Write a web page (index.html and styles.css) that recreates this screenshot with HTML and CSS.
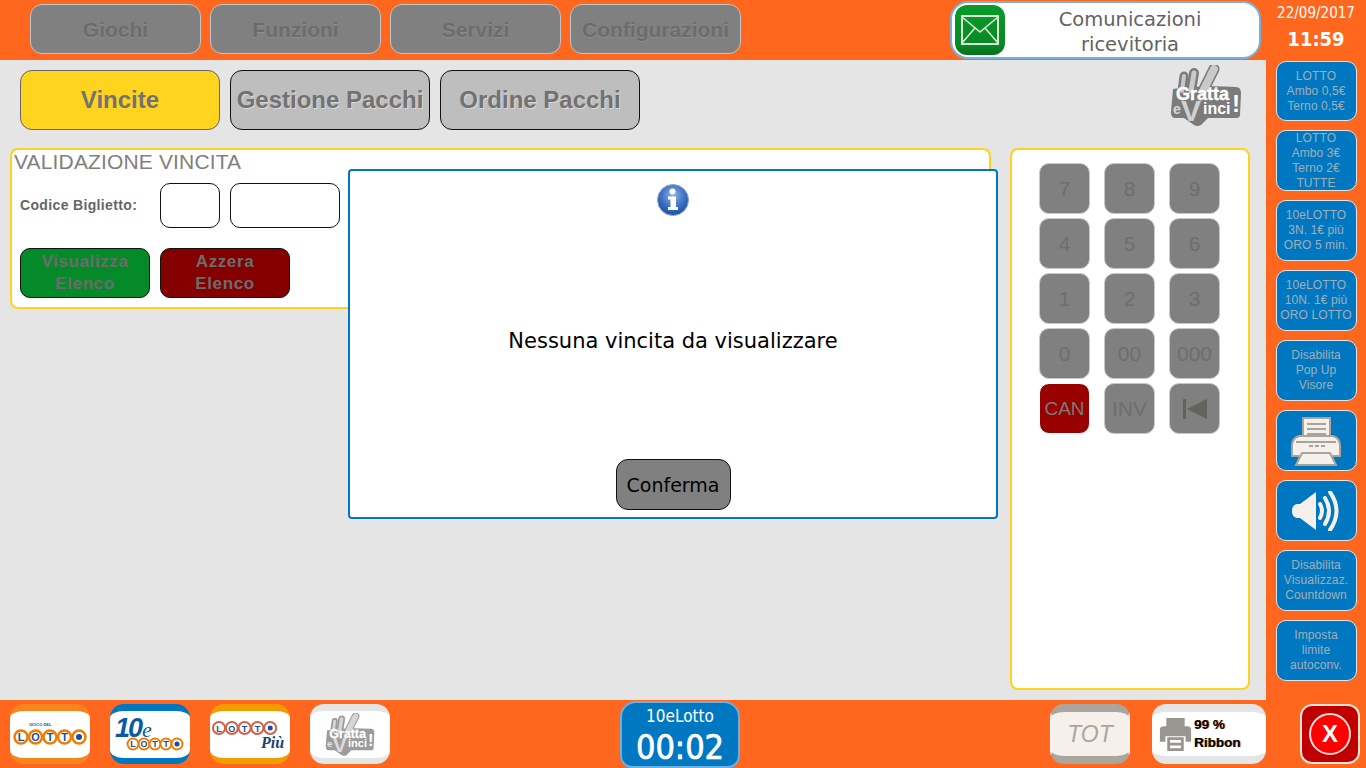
FILE: index.html
```html
<!DOCTYPE html>
<html lang="it">
<head>
<meta charset="utf-8">
<title>Validazione vincita</title>
<link rel="stylesheet" href="styles.css">
</head>
<body>
<svg class="defs" width="0" height="0" aria-hidden="true">
  <defs>
    <symbol id="gratta" viewBox="0 0 72 62">
      <path d="M3 24 Q30 20 66 22 Q71 22 71 28 L70 50 Q70 53 66 53 L38 53 L31 60 Q27 62 24 60 L14 53 L5 53 Q1 53 1 47 Z" fill="#7b7b7b"/>
      <path d="M12 26 L14 11" stroke="#7b7b7b" stroke-width="9" stroke-linecap="round"/>
      <path d="M12 26 L14 11" stroke="#c9c9c9" stroke-width="4" stroke-linecap="round"/>
      <path d="M21 26 L24 8" stroke="#7b7b7b" stroke-width="10" stroke-linecap="round"/>
      <path d="M21 26 L24 8" stroke="#c9c9c9" stroke-width="5" stroke-linecap="round"/>
      <path d="M33 26 L44 4" stroke="#7b7b7b" stroke-width="11" stroke-linecap="round"/>
      <path d="M33 26 L44 4" stroke="#c9c9c9" stroke-width="8" stroke-linecap="round"/>
      <text x="6" y="35" class="logo-gratta">Gratta</text>
      <text x="3" y="49" class="logo-e">e</text>
      <text x="11" y="56" class="logo-v">V</text>
      <text x="33" y="49" class="logo-inci">inci</text>
      <text x="62" y="47" class="logo-bang">!</text>
    </symbol>
    <symbol id="printer-grey" viewBox="0 0 36 36">
      <rect x="8" y="0" width="20" height="11" fill="#999690"/>
      <path d="M5 9 H31 Q35 9 35 13 V26 H29 V20 H7 V26 H1 V13 Q1 9 5 9 Z" fill="#999690"/>
      <rect x="9" y="21" width="18" height="15" fill="#999690"/>
      <rect x="12" y="24" width="12" height="3" fill="#fff"/>
      <rect x="12" y="30" width="12" height="3" fill="#fff"/>
    </symbol>
  </defs>
</svg>

<div class="app">
  <header class="topbar">
    <nav class="topnav">
      <div class="topbtn">Giochi</div>
      <div class="topbtn">Funzioni</div>
      <div class="topbtn">Servizi</div>
      <div class="topbtn">Configurazioni</div>
    </nav>
    <div class="comms">
      <span class="comms-icon">
        <svg width="38" height="30" viewBox="0 0 38 30">
          <rect x="1" y="1" width="36" height="28" fill="none" stroke="#d8ead8" stroke-width="2"/>
          <path d="M1 2 L19 17 L37 2 M1 28 L14 13 M37 28 L24 13" fill="none" stroke="#d8ead8" stroke-width="1.6"/>
        </svg>
      </span>
      <span class="comms-text">Comunicazioni<br>ricevitoria</span>
    </div>
  </header>

  <aside class="side">
    <div class="clock">
      <div class="clock-date">22/09/2017</div>
      <div class="clock-time">11:59</div>
    </div>
    <div class="sidebtn sidebtn-first"><span>LOTTO<br>Ambo 0,5€<br>Terno 0,5€</span></div>
    <div class="sidebtn"><span>LOTTO<br>Ambo 3€<br>Terno 2€<br>TUTTE</span></div>
    <div class="sidebtn"><span>10eLOTTO<br>3N. 1€ più<br>ORO 5 min.</span></div>
    <div class="sidebtn"><span>10eLOTTO<br>10N. 1€ più<br>ORO LOTTO</span></div>
    <div class="sidebtn"><span>Disabilita<br>Pop Up<br>Visore</span></div>
    <div class="sidebtn">
      <svg width="50" height="50" viewBox="0 0 50 50">
        <rect x="12" y="2" width="27" height="27" fill="#f5f1ea" stroke="#a8a49c" stroke-width="2"/>
        <path d="M16 8 H35 M16 13 H35 M16 18 H35" stroke="#a8a49c" stroke-width="2"/>
        <path d="M8 20 H42 Q49 22 49 30 V40 H1 V30 Q1 22 8 20 Z" fill="#f5f1ea" stroke="#a8a49c" stroke-width="2"/>
        <path d="M5 26 H45" stroke="#a8a49c" stroke-width="2"/>
        <path d="M18 30 H22 M24 30 H28 M30 30 H34" stroke="#a8a49c" stroke-width="2"/>
        <path d="M11 37 H39 L45 49 H5 Z" fill="#f5f1ea" stroke="#a8a49c" stroke-width="2"/>
      </svg>
    </div>
    <div class="sidebtn">
      <svg width="50" height="40" viewBox="0 0 50 40">
        <path d="M9 13 L25 1 V39 L9 27 H6 Q1 26 1 20 Q1 14 6 13 Z" fill="#f5f1ea"/>
        <path d="M29 13 Q33 20 29 27 M34 7 Q42 20 34 33 M39 1 Q52 20 39 39" fill="none" stroke="#f5f1ea" stroke-width="4" stroke-linecap="round"/>
      </svg>
    </div>
    <div class="sidebtn"><span>Disabilita<br>Visualizzaz.<br>Countdown</span></div>
    <div class="sidebtn"><span>Imposta<br>limite<br>autoconv.</span></div>
  </aside>

  <main class="main">
    <div class="tabrow">
      <div class="tabs">
        <div class="tab tab-active">Vincite</div>
        <div class="tab">Gestione Pacchi</div>
        <div class="tab">Ordine Pacchi</div>
      </div>
      <svg class="tab-logo" width="72" height="62"><use href="#gratta"/></svg>
    </div>

    <div class="content">
      <section class="panel panel-form">
        <h1 class="panel-title">VALIDAZIONE VINCITA</h1>
        <div class="code-row">
          <label class="code-label">Codice Biglietto:</label>
          <div class="code-box code-short"></div>
          <div class="code-box code-long"></div>
        </div>
        <div class="action-row">
          <div class="action action-green">Visualizza<br>Elenco</div>
          <div class="action action-red">Azzera<br>Elenco</div>
        </div>
      </section>

      <section class="panel panel-keys">
        <div class="keypad">
          <div class="key">7</div><div class="key">8</div><div class="key">9</div>
          <div class="key">4</div><div class="key">5</div><div class="key">6</div>
          <div class="key">1</div><div class="key">2</div><div class="key">3</div>
          <div class="key">0</div><div class="key">00</div><div class="key">000</div>
          <div class="key key-can">CAN</div><div class="key">INV</div>
          <div class="key">
            <svg width="24" height="20" viewBox="0 0 24 20"><rect x="0" y="0" width="3" height="20" fill="#64625c"/><path d="M24 0 V20 L4 10 Z" fill="#64625c"/></svg>
          </div>
        </div>
      </section>
    </div>

    <div class="modal">
      <svg class="modal-icon" width="32" height="32" viewBox="0 0 32 32">
        <defs>
          <radialGradient id="infoGrad" cx="50%" cy="35%" r="65%">
            <stop offset="0%" stop-color="#8fb4ea"/>
            <stop offset="60%" stop-color="#3c6fc0"/>
            <stop offset="100%" stop-color="#1f4f9e"/>
          </radialGradient>
        </defs>
        <circle cx="16" cy="16" r="15.5" fill="url(#infoGrad)" stroke="#8ea8cc" stroke-width="1"/>
        <circle cx="15.5" cy="7.5" r="3" fill="#fff"/>
        <path d="M11 12.5 H19 V23 H21 V26 H11 V23 H13.5 V15.5 H11 Z" fill="#fff"/>
      </svg>
      <p class="modal-msg">Nessuna vincita da visualizzare</p>
      <div class="modal-btn">Conferma</div>
    </div>
  </main>

  <footer class="bottom">
    <div class="games">
      <div class="game game-lotto">
        <svg width="78" height="44" viewBox="0 0 78 44">
          <text x="18" y="13" class="lotto-small">GIOCO DEL</text>
          <g class="lotto-ring"><circle cx="10" cy="24" r="6.5"/><circle cx="24.500" cy="24" r="6.500"/><circle cx="39" cy="24" r="6.5"/><circle cx="53.500" cy="24" r="6.500"/><circle cx="68" cy="24" r="6.5"/></g>
          <text x="10" y="28" class="lotto-letter">L</text><text x="24.500" y="28" class="lotto-letter">O</text><text x="39" y="28" class="lotto-letter">T</text><text x="53.500" y="28" class="lotto-letter">T</text>
          <circle cx="68" cy="24" r="3" fill="#1f4c9a"/>
        </svg>
      </div>
      <div class="game game-10">
        <svg width="78" height="44" viewBox="0 0 78 44">
          <text x="4" y="24" class="ten-num">10</text>
          <text x="31" y="24" class="ten-e">e</text>
          <g class="lotto-ring-sm"><circle cx="22" cy="31" r="5.500"/><circle cx="33" cy="31" r="5.500"/><circle cx="44" cy="31" r="5.500"/><circle cx="55" cy="31" r="5.500"/><circle cx="66" cy="31" r="5.500"/></g>
          <text x="22" y="34" class="lotto-letter-sm">L</text><text x="33" y="34" class="lotto-letter-sm">O</text><text x="44" y="34" class="lotto-letter-sm">T</text><text x="55" y="34" class="lotto-letter-sm">T</text>
          <circle cx="66" cy="31" r="2.500" fill="#1f4c9a"/>
        </svg>
      </div>
      <div class="game game-piu">
        <svg width="78" height="44" viewBox="0 0 78 44">
          <g class="piu-ring"><circle cx="8" cy="15" r="6"/><circle cx="20.800" cy="15" r="6"/><circle cx="33.600" cy="15" r="6"/><circle cx="46.400" cy="15" r="6"/><circle cx="59.200" cy="15" r="6"/></g>
          <text x="8" y="18.500" class="lotto-letter-sm">L</text><text x="20.800" y="18.500" class="lotto-letter-sm">O</text><text x="33.600" y="18.500" class="lotto-letter-sm">T</text><text x="46.400" y="18.500" class="lotto-letter-sm">T</text>
          <circle cx="59.200" cy="15" r="2.500" fill="#1f4c9a"/>
          <text x="50" y="35" class="piu-text">Più</text>
        </svg>
      </div>
      <div class="game game-gratta">
        <svg class="game-gratta-logo" width="50" height="44"><use href="#gratta"/></svg>
      </div>
    </div>
    <div class="timer">
      <div class="timer-name">10eLotto</div>
      <div class="timer-count">00:02</div>
    </div>
    <div class="bottom-right">
      <div class="tot">TOT</div>
      <div class="ribbon">
        <svg width="33" height="33"><use href="#printer-grey"/></svg>
        <span class="ribbon-text">99 %<br>Ribbon</span>
      </div>
      <div class="close">
        <span class="close-ring">X</span>
      </div>
    </div>
  </footer>
</div>
</body>
</html>
```

FILE: styles.css
```css
* { box-sizing: border-box; }
html, body { margin: 0; padding: 0; }
body { width: 1366px; height: 768px; overflow: hidden; font-family: "Liberation Sans", Arial, sans-serif; }
.defs { position: absolute; }

.app {
  display: grid;
  grid-template-columns: 1266px 100px;
  grid-template-rows: 60px 640px 68px;
  width: 1366px;
  height: 768px;
  background: #ff671f;
}

/* top bar */
.topbar { grid-column: 1; grid-row: 1; display: flex; justify-content: space-between; padding-left: 30px; padding-right: 5px; }
.topnav { display: flex; gap: 9px; padding-top: 4px; }
.topbtn {
  width: 171px; height: 50px;
  display: flex; align-items: center; justify-content: center;
  background: #808080;
  border: 1px solid #c4c4c4;
  border-radius: 12px;
  padding-top: 2px;
  color: #6c6c6c;
  font-weight: 700;
  font-size: 21px;
  text-shadow: 0 1px 1px #8f8f8f;
}
.comms {
  width: 311px; height: 58px; margin-top: 1px;
  display: flex; align-items: center;
  background: #fff;
  border: 2px solid #7ab0dc;
  border-radius: 18px;
  padding-left: 3px;
}
.comms-icon {
  width: 50px; height: 50px;
  display: flex; align-items: center; justify-content: center;
  border-radius: 12px;
  background: linear-gradient(#0a9b2a, #088a24 80%, #06701c);
  flex: none;
}
.comms-text {
  flex: 1;
  text-align: center;
  font-family: "DejaVu Sans", sans-serif;
  font-size: 19.5px;
  line-height: 25px;
  color: #636363;
  padding-top: 4px;
  padding-right: 4px;
}

/* side column */
.side { grid-column: 2; grid-row: 1 / 3; display: flex; flex-direction: column; align-items: center; gap: 9px; }
.clock { height: 52px; width: 100%; flex: none; text-align: center; color: #fff; }
.clock-date { font-family: "DejaVu Sans Condensed", "DejaVu Sans", sans-serif; font-size: 15px; line-height: 18px; padding-top: 4px; height: 22px; }
.clock-time { font-family: "DejaVu Sans Condensed", "DejaVu Sans", sans-serif; font-weight: 700; font-size: 20px; line-height: 24px; padding-top: 5px; }
.sidebtn {
  width: 81px; height: 61px;
  flex: none;
  display: flex; align-items: center; justify-content: center;
  background: #0078c1;
  border: 1px solid #dfe6ea;
  border-radius: 10px;
  color: #a2aeb6;
  font-size: 12px;
  line-height: 15px;
  text-align: center;
  letter-spacing: 0.1px;
}
.sidebtn-first { height: 60px; }

/* main */
.main { grid-column: 1; grid-row: 2; position: relative; background: #e5e5e5; padding: 5px 16px 10px 10px; }
.tabrow { display: flex; justify-content: space-between; align-items: flex-start; height: 83px; padding-left: 10px; padding-right: 8px; }
.tabs { display: flex; gap: 10px; padding-top: 5px; }
.tab {
  width: 200px; height: 60px;
  display: flex; align-items: center; justify-content: center;
  background: #bebebe;
  border: 1px solid #111;
  border-radius: 12px;
  color: #727272;
  font-weight: 700;
  font-size: 24px;
  text-shadow: 1px 1px 0 #d8d8d8;
}
.tab-active { background: #ffd41f; border-color: #666; text-shadow: none; }
.content { display: flex; gap: 19px; align-items: flex-start; }
.panel { background: #fff; border: 2px solid #ffd21f; border-radius: 8px; }
.panel-form { width: 981px; height: 161px; padding: 0 8px; }
.panel-title { margin: 0 0 0 -6px; font-weight: 400; font-size: 21px; line-height: 24px; color: #808080; letter-spacing: 0.15px; }
.code-row { display: flex; align-items: center; margin-top: 9px; height: 45px; }
.code-label { width: 140px; font-weight: 700; font-size: 14px; line-height: 16px; color: #666; letter-spacing: 0.35px; padding-bottom: 2px; }
.code-box { height: 45px; background: #fff; border: 1px solid #111; border-radius: 10px; }
.code-short { width: 60px; margin-right: 10px; }
.code-long { width: 110px; }
.action-row { display: flex; gap: 10px; margin-top: 20px; }
.action {
  width: 130px; height: 50px;
  display: flex; align-items: center; justify-content: center;
  border: 1px solid #111;
  border-radius: 10px;
  color: #6c6c6c;
  font-weight: 700;
  font-size: 17px;
  line-height: 22px;
  letter-spacing: 0.6px;
  text-align: center;
}
.action-green { background: #058a2a; }
.action-red { background: #840000; }

.panel-keys { width: 240px; height: 542px; padding: 13px 27px; }
.keypad { display: grid; grid-template-columns: repeat(3, 51px); grid-auto-rows: 51px; column-gap: 14px; row-gap: 4px; }
.key {
  display: flex; align-items: center; justify-content: center;
  background: #808080;
  border: 1px solid #c8c8c8;
  border-radius: 10px;
  color: #6e6e6e;
  font-size: 21px;
}
.key-can { background: #990000; border-color: #fff; color: #7a7a7a; font-size: 19px; }

/* modal overlay */
.modal {
  position: absolute;
  left: 348px; top: 109px;
  width: 650px; height: 350px;
  display: flex; flex-direction: column; align-items: center;
  background: #fff;
  border: 2px solid #0078c1;
  border-radius: 4px;
  padding-top: 13px;
}
.modal-msg { margin: 112px 0 0; font-family: "DejaVu Sans", sans-serif; font-size: 21px; line-height: 26px; color: #000; }
.modal-btn {
  margin-top: 105px;
  width: 115px; height: 51px;
  display: flex; align-items: center; justify-content: center;
  background: #808080;
  border: 1px solid #111;
  border-radius: 12px;
  font-family: "DejaVu Sans", sans-serif;
  font-size: 19px;
  color: #000;
}

/* bottom */
.bottom { grid-column: 1 / 3; grid-row: 3; display: flex; position: relative; padding-left: 10px; }
.games { display: flex; gap: 20px; padding-top: 4px; width: 610px; }
.game {
  width: 80px; height: 60px;
  display: flex; align-items: center; justify-content: center;
  background: #fff;
  border-radius: 14px;
  overflow: hidden;
}
.game-lotto { border-top: 7px solid #f7851e; border-bottom: 6px solid #f7851e; }
.game-10 { border-top: 7px solid #0078c1; border-bottom: 6px solid #0078c1; }
.game-piu { border-top: 7px solid #f29c00; border-bottom: 6px solid #f29c00; }
.game-gratta { border-top: 7px solid #e5e5e5; border-bottom: 6px solid #e5e5e5; }
.game-gratta-logo { opacity: 0.75; }
.lotto-small { font-size: 4px; font-weight: 700; fill: #1f4c9a; }
.lotto-ring circle { fill: #fff; stroke: #f07d00; stroke-width: 2.500; }
.lotto-ring-sm circle { fill: #fff; stroke: #f07d00; stroke-width: 2; }
.piu-ring circle { fill: #fff; stroke: #d2604a; stroke-width: 2; }
.lotto-letter { font-size: 11px; font-weight: 700; fill: #1f4c9a; text-anchor: middle; }
.lotto-letter-sm { font-size: 9px; font-weight: 700; fill: #1f4c9a; text-anchor: middle; }
.ten-num { font-family: "Liberation Sans", sans-serif; font-size: 27px; font-weight: 700; font-style: italic; fill: #0a5aa8; letter-spacing: -2px; }
.ten-e { font-family: "Liberation Serif", serif; font-size: 22px; font-style: italic; fill: #0a5aa8; }
.piu-text { font-family: "Liberation Serif", serif; font-size: 16px; font-weight: 700; font-style: italic; fill: #1f3f7a; }
.logo-gratta { font-family: "Liberation Sans", sans-serif; font-weight: 700; font-size: 18px; fill: #fff; stroke: #fff; stroke-width: 0.4px; }
.logo-e { font-family: "Liberation Sans", sans-serif; font-weight: 700; font-size: 14px; fill: #d8d8d8; }
.logo-v { font-family: "Liberation Sans", sans-serif; font-weight: 700; font-size: 30px; fill: #d0d0d0; }
.logo-inci { font-family: "Liberation Sans", sans-serif; font-weight: 700; font-size: 16px; fill: #fff; }
.logo-bang { font-family: "Liberation Sans", sans-serif; font-weight: 700; font-size: 24px; fill: #fff; }

.timer {
  width: 120px; height: 67px; margin-top: 1px;
  background: #0078c1;
  border: 2px solid #6ab0e0;
  border-radius: 16px 16px 12px 12px;
  color: #fff;
  text-align: center;
}
.timer-name { font-family: "DejaVu Sans Condensed", "DejaVu Sans", sans-serif; font-size: 17px; line-height: 18px; padding-top: 4px; }
.timer-count { font-family: "DejaVu Sans Condensed", "DejaVu Sans", sans-serif; font-size: 34px; line-height: 40px; padding-top: 2px; -webkit-text-stroke: 0.7px #fff; }

.bottom-right { display: flex; padding-top: 4px; margin-left: 310px; }
.tot {
  width: 80px; height: 60px;
  display: flex; align-items: center; justify-content: center;
  background: #f5f1ea;
  border: 1px solid #fff;
  border-top: 8px solid #aaa69d;
  border-bottom: 8px solid #aaa69d;
  border-radius: 14px;
  color: #aaa69d;
  font-style: italic;
  font-size: 23px;
}
.ribbon {
  width: 114px; height: 60px; margin-left: 22px;
  display: flex; align-items: center; gap: 2px;
  background: #fff;
  border-top: 8px solid #e5e5e5;
  border-bottom: 8px solid #e5e5e5;
  border-radius: 14px;
  padding-left: 7px;
}
.ribbon-text { font-size: 13.500px; line-height: 18px; font-weight: 700; color: #000; text-shadow: 1px 0 0 #d87a3a; }
.close {
  width: 60px; height: 60px; margin-left: 34px;
  display: flex; align-items: center; justify-content: center;
  background: #bf0000;
  border: 2px solid #f4e4da;
  border-radius: 12px;
}
.close-ring {
  width: 42px; height: 42px;
  display: flex; align-items: center; justify-content: center;
  background: #ff0000;
  border: 2px solid #f6dede;
  border-radius: 50%;
  color: #fff;
  font-weight: 700;
  font-size: 24px;
}
```
